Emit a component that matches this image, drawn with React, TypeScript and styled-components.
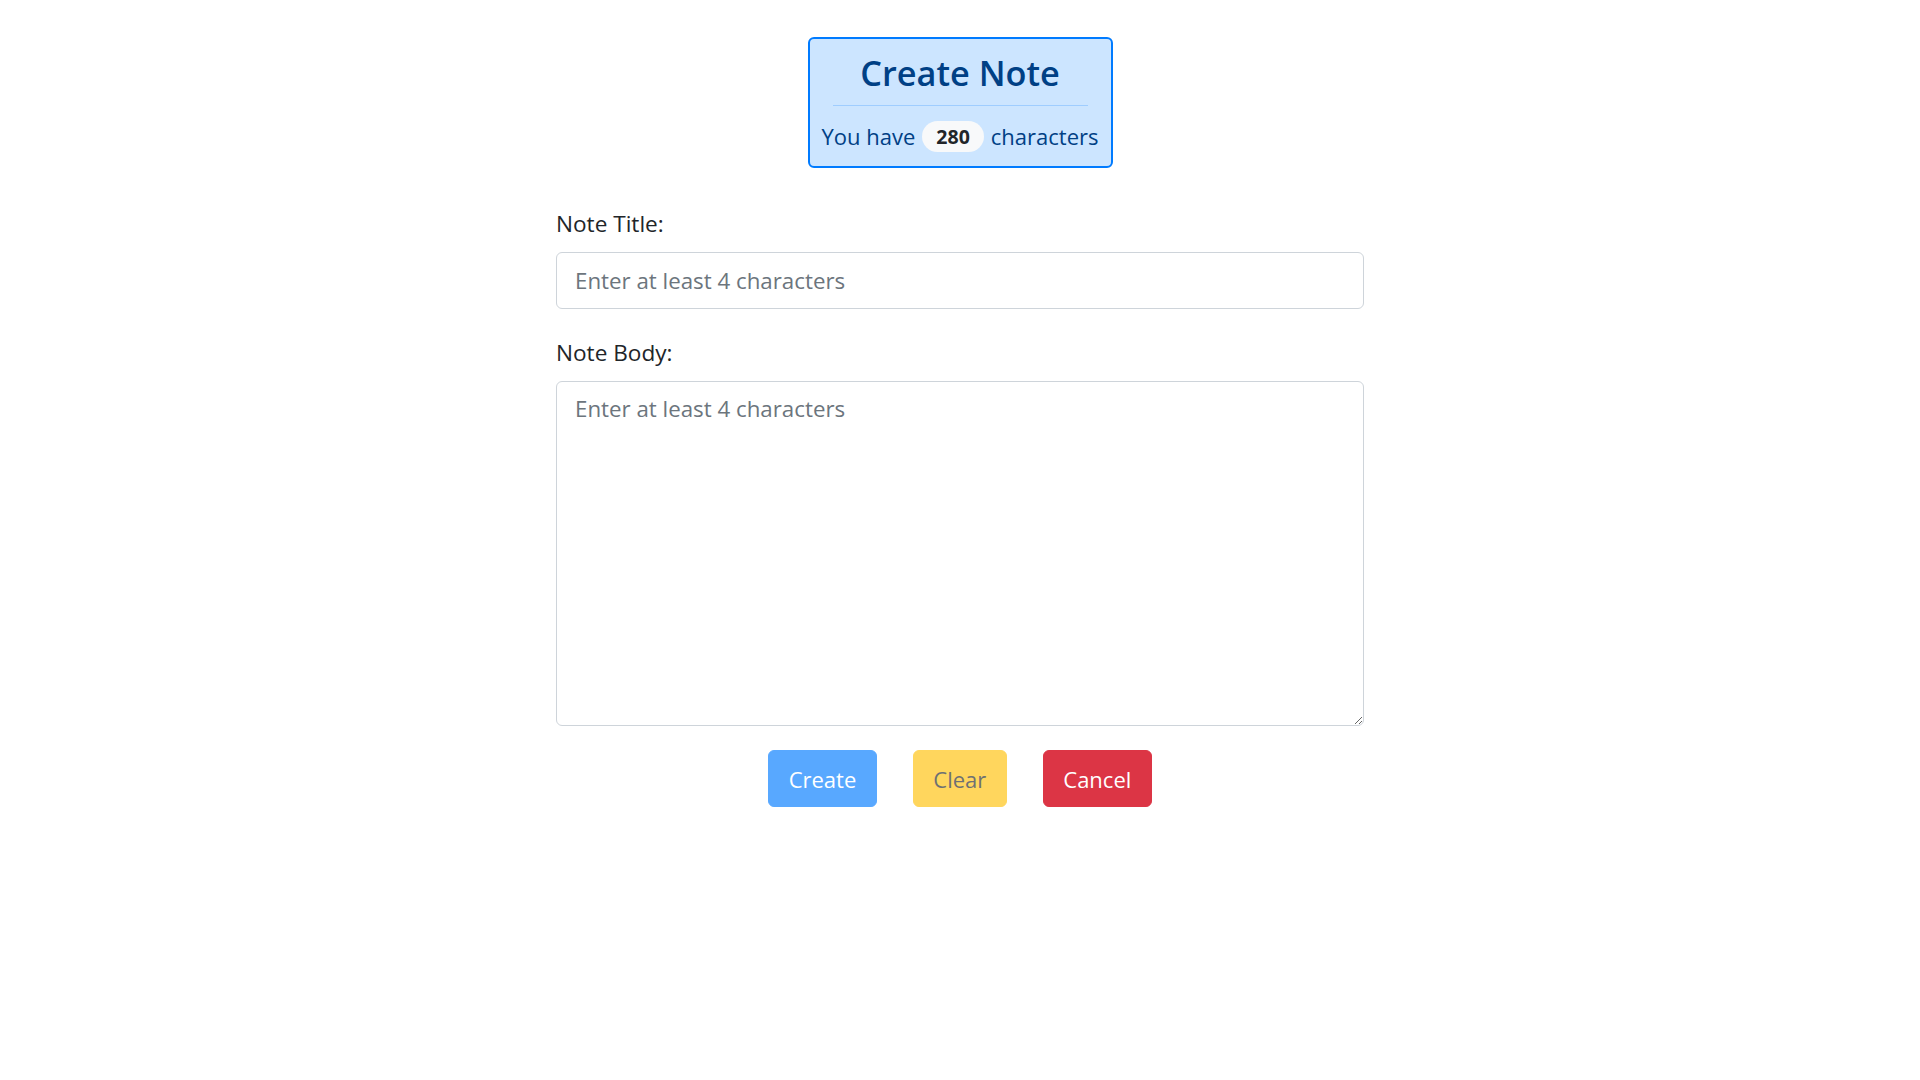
import React from "react";
import styled, { createGlobalStyle } from "styled-components";

const GlobalStyle = createGlobalStyle`
  html, body {
    margin: 0;
    padding: 0;
    background: #ffffff;
  }
  body {
    font-family: "Open Sans", "Noto Sans", sans-serif;
    color: #212529;
  }
  *, *::before, *::after {
    box-sizing: border-box;
  }
`;

const Page = styled.main`
  display: flex;
  flex-direction: column;
  align-items: center;
  padding-top: 37px;
`;

const Header = styled.header`
  width: 305px;
  height: 131px;
  background: #cce5ff;
  border: 2px solid #007bff;
  border-radius: 6px;
  color: #004085;
  display: flex;
  flex-direction: column;
  align-items: center;
  padding-top: 13px;
`;

const Title = styled.h2`
  margin: 0;
  font-size: 34.3px;
  font-weight: 600;
  line-height: 42px;
  color: #004085;
`;

const Divider = styled.hr`
  align-self: stretch;
  margin: 11px 23px 0;
  border: 0;
  border-top: 1.5px solid #9fcdff;
`;

const Counter = styled.p`
  margin: 15px 0 0;
  display: flex;
  align-items: center;
  gap: 7px;
  font-size: 22px;
  line-height: 31px;
  white-space: nowrap;
`;

const Badge = styled.span`
  display: inline-flex;
  align-items: center;
  justify-content: center;
  height: 31px;
  padding: 0 14px;
  border-radius: 16px;
  background: #f8f9fa;
  color: #212529;
  font-size: 19.5px;
  font-weight: 700;
`;

const Form = styled.form`
  width: 808px;
  margin-top: 36px;
  display: flex;
  flex-direction: column;
`;

const Group = styled.div`
  display: flex;
  flex-direction: column;
  margin-bottom: 24px;
`;

const Label = styled.label`
  display: block;
  font-size: 22.6px;
  line-height: 36px;
  padding-top: 2px;
  height: 36px;
  margin-bottom: 12px;
  color: #212529;
`;

const fieldStyles = `
  width: 100%;
  font-family: "Open Sans", "Noto Sans", sans-serif;
  font-size: 22.3px;
  line-height: 36px;
  color: #495057;
  background: #ffffff;
  border: 1.5px solid #ced4da;
  border-radius: 6px;
  padding: 9px 18px;
  outline: none;
  &::placeholder {
    color: #6c757d;
    opacity: 1;
  }
`;

const Input = styled.input`
  ${fieldStyles}
  height: 57px;
`;

const TextArea = styled.textarea`
  ${fieldStyles}
  height: 345px;
  resize: vertical;
  display: block;
`;

const Actions = styled.div`
  display: flex;
  justify-content: center;
  gap: 36px;
`;

const variants = {
  primary: { bg: "#007bff", fg: "#ffffff", disabled: true },
  warning: { bg: "#ffc107", fg: "#212529", disabled: true },
  danger: { bg: "#dc3545", fg: "#ffffff", disabled: false },
} as const;

const Button = styled.button<{ $variant: keyof typeof variants }>`
  height: 57px;
  padding: 0 19.5px;
  font-family: "Open Sans", "Noto Sans", sans-serif;
  font-size: 22px;
  line-height: 36px;
  border: 1.5px solid ${(p) => variants[p.$variant].bg};
  border-radius: 6px;
  background: ${(p) => variants[p.$variant].bg};
  color: ${(p) => variants[p.$variant].fg};
  opacity: ${(p) => (variants[p.$variant].disabled ? 0.65 : 1)};
  cursor: pointer;
`;

export default function App() {
  return (
    <>
      <GlobalStyle />
      <Page>
        <Header>
          <Title>Create Note</Title>
          <Divider />
          <Counter>
            <span>You have</span>
            <Badge>280</Badge>
            <span>characters</span>
          </Counter>
        </Header>
        <Form onSubmit={(e) => e.preventDefault()}>
          <Group>
            <Label htmlFor="note-title">Note Title:</Label>
            <Input id="note-title" type="text" placeholder="Enter at least 4 characters" />
          </Group>
          <Group>
            <Label htmlFor="note-body">Note Body:</Label>
            <TextArea id="note-body" placeholder="Enter at least 4 characters" />
          </Group>
          <Actions>
            <Button type="submit" $variant="primary" disabled>
              Create
            </Button>
            <Button type="button" $variant="warning" disabled>
              Clear
            </Button>
            <Button type="button" $variant="danger">
              Cancel
            </Button>
          </Actions>
        </Form>
      </Page>
    </>
  );
}
